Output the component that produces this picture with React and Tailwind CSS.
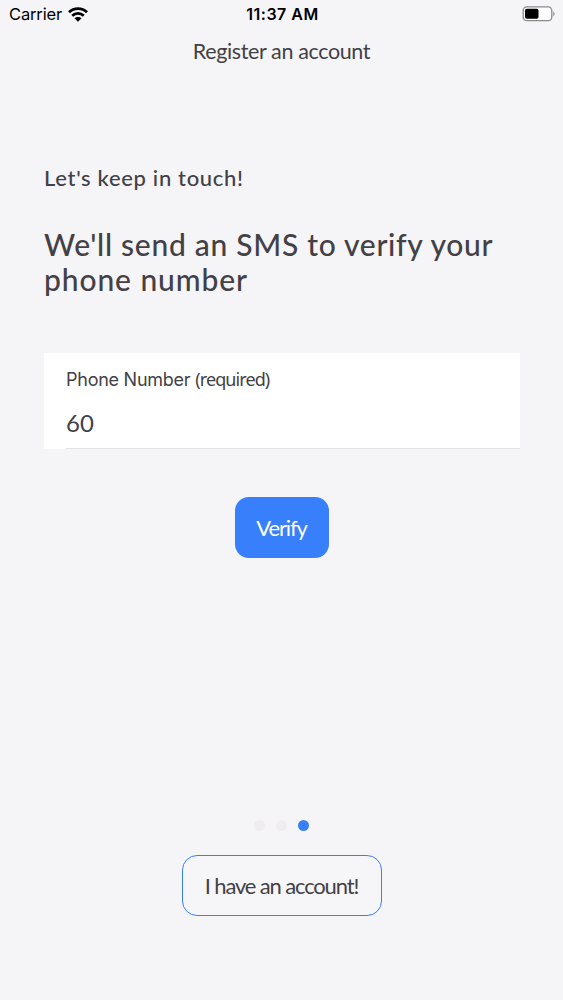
import React, { useState } from 'react'

const WifiIcon = () => (
  <svg width="20" height="15" viewBox="0 0 20 15" fill="none" stroke="#000" strokeWidth="2.7">
    <path d="M1 5.3C6 0.4 14 0.4 19 5.3" />
    <path d="M4.2 8.8C7.6 5.6 12.4 5.6 15.8 8.8" />
    <path d="M6.5 11.3C8.5 9.4 11.5 9.4 13.5 11.3L10 14.7Z" fill="#000" stroke="none" />
  </svg>
)

const BatteryIcon = () => (
  <svg width="34" height="16" viewBox="0 0 34 16" fill="none">
    <rect x="1.2" y="0.9" width="28.6" height="13.8" rx="3.6" fill="#fff" stroke="#8b8a8d" strokeWidth="1.3" />
    <rect x="3" y="2.8" width="13.5" height="10" rx="1.8" fill="#000" />
    <path d="M31.3 5.5c1.7.7 1.7 4 0 4.7z" fill="#8b8a8d" />
  </svg>
)

const StatusBar = () => (
  <div className="grid grid-cols-3 items-center h-7 pl-[9px] pr-[7px] font-['Inter',sans-serif] text-black">
    <div className="flex items-center gap-[6px]">
      <span className="text-[16.5px] leading-7 tracking-[-0.15px]">Carrier</span>
      <WifiIcon />
    </div>
    <span className="text-center text-[16px] leading-7 font-semibold tracking-[0.5px] whitespace-nowrap">11:37 AM</span>
    <div className="flex justify-end">
      <BatteryIcon />
    </div>
  </div>
)

const steps = ['details', 'profile', 'phone']

const App = () => {
  const [phone, setPhone] = useState('60')
  const activeStep = 'phone'

  return (
    <div className="h-[1000px] w-[563px] flex flex-col overflow-hidden bg-[#f5f4f7] font-['Lato',sans-serif] text-[#434145]">
      <StatusBar />

      <header className="h-[46px] text-center text-[21.5px] leading-[46px] tracking-[-0.37px]">
        Register an account
      </header>

      <main className="px-11 pt-[88px]">
        <p className="text-[22px] leading-8 font-medium tracking-[0.67px]">Let's keep in touch!</p>
        <h1 className="mt-[33px] text-[30px] leading-[35px] font-medium tracking-[0.7px] whitespace-nowrap">
          We'll send an SMS to verify your
          <br />
          <span className="tracking-[0.9px]">phone number</span>
        </h1>

        {/* Phone field */}
        <div className="mt-[56px] h-24 w-[476px] bg-white pl-[22px] flex flex-col">
          <label htmlFor="phone" className="mt-[14px] text-[18px] leading-6 tracking-[-0.25px] font-['Inter',sans-serif]">
            Phone Number <span className="font-['Noto_Sans',sans-serif] tracking-[-0.9px]">(required)</span>
          </label>
          <input
            id="phone"
            value={phone}
            onChange={(e) => setPhone(e.target.value)}
            className="mt-[15px] h-[43px] pb-[11px] border-b border-[#e4e2e6] text-[24px] leading-8 outline-none"
          />
        </div>

        <div className="mt-[48px] flex justify-center">
          <button className="h-[61px] w-[94px] rounded-[14px] bg-[#387ffb] text-[22px] tracking-[-1.15px] text-white">
            Verify
          </button>
        </div>
      </main>

      <footer className="mt-auto mb-[84px] flex flex-col items-center">
        <div className="flex gap-[11px] mb-6">
          {steps.map(step => (
            <span
              key={step}
              className={`w-[11px] h-[11px] rounded-full ${step === activeStep ? 'bg-[#387ffb]' : 'bg-[#efedf1]'}`}
            />
          ))}
        </div>
        <button className="h-[61px] w-[200px] rounded-[15px] border border-[#387ffb] bg-[#f6f6f9] text-[22px] tracking-[-1.15px] whitespace-nowrap">
          I have an account!
        </button>
      </footer>
    </div>
  )
}

export default App
